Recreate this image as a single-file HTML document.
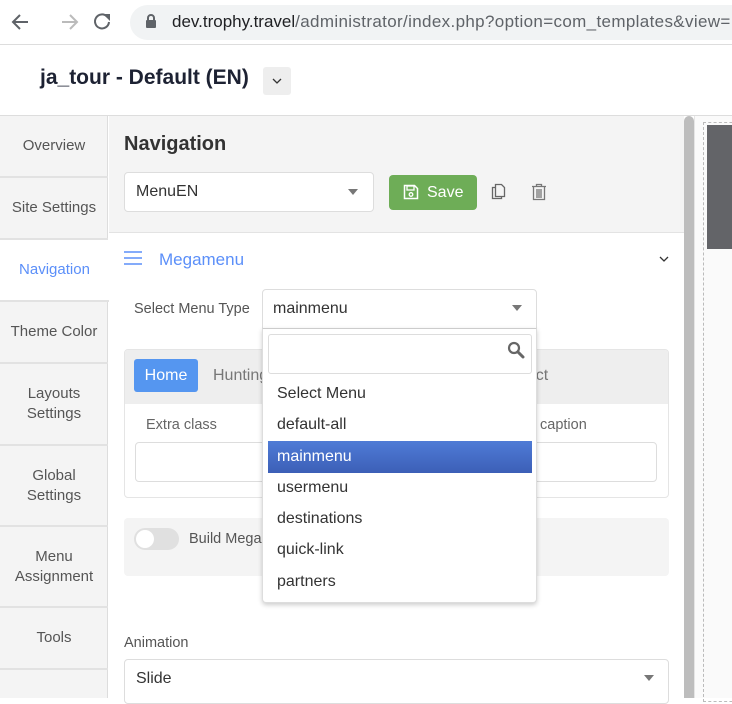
<!DOCTYPE html>
<html><head><meta charset="utf-8"><style>
*{box-sizing:border-box;margin:0;padding:0}
body{width:732px;height:698px;overflow:hidden;position:relative;background:#fff;font-family:"Liberation Sans",Arial,sans-serif;color:#333}
.a{position:absolute}
.side{left:0;top:116px;width:108px;height:582px;background:#f4f4f4;border-right:1px solid #ddd}
.si{position:absolute;left:0;width:108px;display:flex;align-items:center;justify-content:center;text-align:center;font-size:15px;color:#555;line-height:20px;border-bottom:2px solid #e2e2e2}
.sel{border:1px solid #ddd;border-radius:4px;background:#fff}
.tri{position:absolute;width:0;height:0;border-left:5px solid transparent;border-right:5px solid transparent;border-top:6px solid #777}
.dd div{position:absolute;left:14px;font-size:16px;color:#333}
</style></head><body>
<div class="a" style="left:0;top:0;width:732px;height:45px;background:#fff;border-bottom:1px solid #ddd"></div>
<svg class="a" style="left:10px;top:11px" width="110" height="22" viewBox="0 0 110 22">
<path d="M18 11H4M10 4L3 11l7 7" stroke="#5f6368" stroke-width="2" fill="none"/>
<path d="M52 11H66M60 4l7 7-7 7" stroke="#bbb" stroke-width="2" fill="none"/>
<path d="M97 5.5A7 7 0 1 0 99 11" stroke="#5f6368" stroke-width="2" fill="none"/><path d="M93 3h7v7z" fill="#5f6368"/>
</svg>
<div class="a" style="left:130px;top:5px;width:620px;height:35px;background:#f1f3f4;border-radius:18px"></div>
<svg class="a" style="left:145px;top:13px" width="12" height="16" viewBox="0 0 12 16"><path d="M3 7V5a3 3 0 0 1 6 0v2" stroke="#5f6368" stroke-width="2" fill="none"/><rect x="1" y="7" width="10" height="8" rx="1" fill="#5f6368"/></svg>
<div class="a" style="left:172px;top:12px;font-size:17px;color:#202124;white-space:nowrap">dev.trophy.travel<span style="color:#5f6368;letter-spacing:0.35px">/administrator/index.php?option=com_templates&amp;view=</span></div>
<div class="a" style="left:40px;top:66px;font-size:21px;font-weight:bold;color:#1d2233">ja_tour - Default (EN)</div>
<div class="a" style="left:263px;top:67px;width:28px;height:28px;background:#eee;border-radius:3px"></div>
<svg class="a" style="left:272px;top:78px" width="10" height="6"><path d="M1 1l4 4 4-4" stroke="#333" fill="none" stroke-width="1.3"/></svg>
<div class="a" style="left:0;top:115px;width:732px;height:1px;background:#ddd"></div>
<div class="a side"></div>
<div class="si" style="top:116px;height:62px">Overview</div>
<div class="si" style="top:178px;height:62px">Site Settings</div>
<div class="si" style="top:240px;height:62px;background:#fff;color:#5b8ff9;width:109px">Navigation</div>
<div class="si" style="top:302px;height:62px">Theme Color</div>
<div class="si" style="top:364px;height:82px">Layouts<br>Settings</div>
<div class="si" style="top:446px;height:81px">Global<br>Settings</div>
<div class="si" style="top:527px;height:81px">Menu<br>Assignment</div>
<div class="si" style="top:608px;height:62px">Tools</div>
<div class="a" style="left:109px;top:116px;width:575px;height:117px;background:#f4f4f4;border-bottom:1px solid #e3e3e3"></div>
<div class="a" style="left:124px;top:133px;font-size:20px;font-weight:bold;color:#333">Navigation</div>
<div class="a sel" style="left:124px;top:172px;width:250px;height:40px"></div>
<div class="a" style="left:136px;top:183px;font-size:16px;color:#333">MenuEN</div>
<div class="tri" style="left:348px;top:189px"></div>
<div class="a" style="left:389px;top:175px;width:88px;height:35px;background:#6ead57;border-radius:4px"></div>
<svg class="a" style="left:403px;top:184px" width="16" height="16" viewBox="0 0 16 16"><path d="M1.5 1.5h10l3 3v10h-13z" stroke="#fff" stroke-width="1.5" fill="none"/><rect x="4" y="2" width="7" height="4" fill="none" stroke="#fff" stroke-width="1.3"/><circle cx="8" cy="10.5" r="1.8" fill="none" stroke="#fff" stroke-width="1.3"/></svg>
<div class="a" style="left:427px;top:184px;font-size:16px;color:#fff">Save</div>
<svg class="a" style="left:491px;top:183px" width="16" height="18" viewBox="0 0 16 18"><path d="M4.5 4.5H1.5v11h9v-2" stroke="#666" stroke-width="1.3" fill="none"/><path d="M4.5 1.5h6l3 3v9h-9z" stroke="#666" stroke-width="1.3" fill="none"/></svg>
<svg class="a" style="left:531px;top:183px" width="16" height="18" viewBox="0 0 16 18"><path d="M1 3.5h14M5.5 3.5V1.5h5v2M2.5 4v12.5h11V4M6 6v9M8 6v9M10 6v9" stroke="#777" stroke-width="1.3" fill="none"/></svg>
<svg class="a" style="left:124px;top:251px" width="18" height="14"><path d="M0 1h18M0 7h18M0 13h18" stroke="#5b8ff9" stroke-width="1.5"/></svg>
<div class="a" style="left:159px;top:250px;font-size:17px;color:#5b8ff9">Megamenu</div>
<svg class="a" style="left:659px;top:256px" width="10" height="6"><path d="M1 1l4 4 4-4" stroke="#333" fill="none" stroke-width="1.3"/></svg>
<div class="a" style="left:134px;top:301px;font-size:14.5px;color:#555">Select Menu Type</div>
<div class="a" style="left:124px;top:349px;width:545px;height:149px;border:1px solid #e5e5e5;border-radius:4px;background:#fff;overflow:hidden"><div style="height:54px;background:#eee"></div></div>
<div class="a" style="left:134px;top:359px;width:64px;height:33px;background:#5596f0;border-radius:3px;color:#fff;font-size:16px;text-align:center;line-height:33px">Home</div>
<div class="a" style="left:213px;top:367px;font-size:16px;color:#777">Hunting</div>
<div class="a" style="left:493px;top:367px;font-size:16px;color:#777">Contact</div>
<div class="a" style="left:146px;top:417px;font-size:14.5px;color:#666">Extra class</div>
<div class="a" style="left:540px;top:417px;font-size:14.5px;color:#666">caption</div>
<div class="a sel" style="left:135px;top:442px;width:140px;height:40px"></div>
<div class="a sel" style="left:520px;top:442px;width:137px;height:40px"></div>
<div class="a" style="left:124px;top:518px;width:545px;height:58px;background:#f4f4f4;border-radius:4px"></div>
<div class="a" style="left:134px;top:528px;width:45px;height:22px;background:#e0e0e0;border-radius:11px"></div>
<div class="a" style="left:136px;top:530px;width:18px;height:18px;background:#fff;border-radius:50%"></div>
<div class="a" style="left:189px;top:531px;font-size:14.5px;color:#555">Build Mega</div>
<div class="a" style="left:124px;top:635px;font-size:14.5px;color:#555">Animation</div>
<div class="a sel" style="left:124px;top:659px;width:545px;height:45px"></div>
<div class="a" style="left:136px;top:670px;font-size:16px;color:#333">Slide</div>
<div class="tri" style="left:644px;top:675px"></div>
<div class="a" style="left:262px;top:289px;width:275px;height:40px;border:1px solid #ddd;border-radius:4px 4px 0 0;background:#fff"></div>
<div class="a" style="left:273px;top:300px;font-size:16px;color:#333">mainmenu</div>
<div class="tri" style="left:512px;top:305px"></div>
<div class="a dd" style="left:262px;top:328px;width:275px;height:275px;background:#fff;border:1px solid #ddd;border-top-color:#ccc;border-radius:0 0 4px 4px;box-shadow:0 2px 5px rgba(0,0,0,.2)">
<span style="position:absolute;left:5px;top:5px;width:264px;height:40px;border:1px solid #ddd;border-radius:3px"></span>
<svg style="position:absolute;left:244px;top:12px" width="18" height="18" viewBox="0 0 18 18"><circle cx="7" cy="7" r="5" stroke="#666" stroke-width="2.2" fill="none"/><path d="M11 11l5 5" stroke="#666" stroke-width="3" stroke-linecap="round"/></svg>
<span style="position:absolute;left:5px;top:112px;width:264px;height:32px;background:linear-gradient(#4f7bd6,#3c5fb7)"></span>
<div style="top:56px">Select Menu</div>
<div style="top:87px">default-all</div>
<div style="top:119px;color:#fff">mainmenu</div>
<div style="top:150px">usermenu</div>
<div style="top:181px">destinations</div>
<div style="top:212px">quick-link</div>
<div style="top:244px">partners</div>
</div>
<div class="a" style="left:684px;top:116px;width:10px;height:582px;background:#bdbdbd;border-radius:5px 5px 0 0"></div>
<div class="a" style="left:694px;top:116px;width:1px;height:582px;background:#e5e5e5"></div>
<div class="a" style="left:695px;top:116px;width:37px;height:582px;background:#fafafa"></div>
<div class="a" style="left:703px;top:122px;width:40px;height:580px;border:1px dashed #bbb"></div>
<div class="a" style="left:707px;top:125px;width:25px;height:124px;background:#636468"></div>
</body></html>
